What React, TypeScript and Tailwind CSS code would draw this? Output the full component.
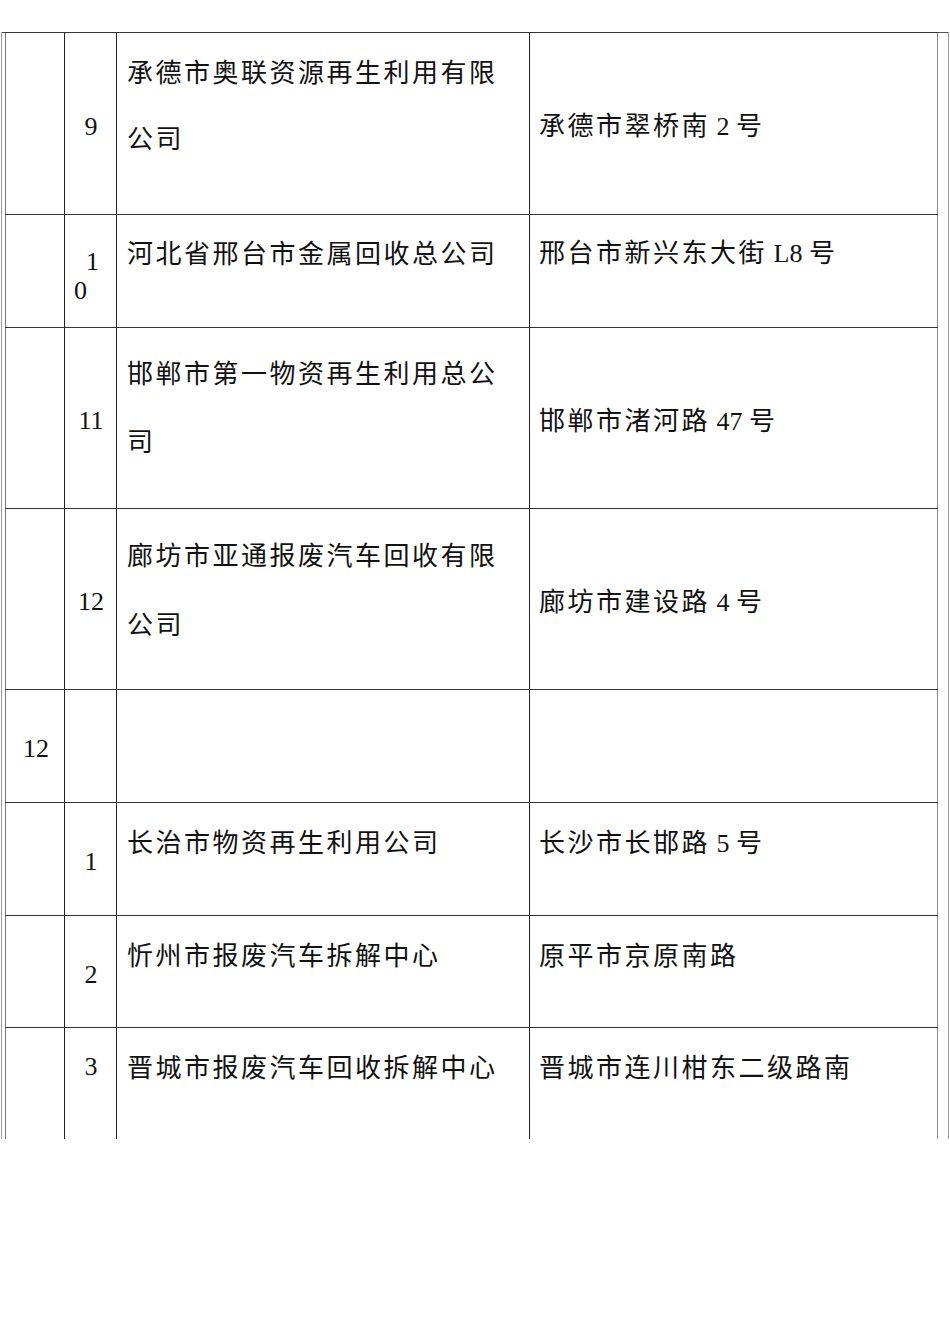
import React from "react";

type Row = {
  h: number;
  c1?: string;
  num?: React.ReactNode;
  numAlign: "center" | "top";
  name?: string[];
  namePt: number;
  nameLh: number;
  addr?: React.ReactNode;
  addrAlign: "center" | "top";
  addrPt: number;
};

const L = ({ children }: { children: React.ReactNode }) => (
  <span className="tracking-normal">{children}</span>
);

const rows: Row[] = [
  { h: 182, num: "9", numAlign: "center", name: ["承德市奥联资源再生利用有限", "公司"], namePt: 8, nameLh: 66, addr: <>承德市翠桥南<L> 2 </L>号</>, addrAlign: "center", addrPt: 7 },
  { h: 113, num: "10", numAlign: "center", name: ["河北省邢台市金属回收总公司"], namePt: 7, nameLh: 66, addr: <>邢台市新兴东大街<L> L8 </L>号</>, addrAlign: "top", addrPt: 6 },
  { h: 181, num: "11", numAlign: "center", name: ["邯郸市第一物资再生利用总公", "司"], namePt: 13, nameLh: 68, addr: <>邯郸市渚河路<L> 47 </L>号</>, addrAlign: "center", addrPt: 7 },
  { h: 181, num: "12", numAlign: "center", name: ["廊坊市亚通报废汽车回收有限", "公司"], namePt: 13, nameLh: 69, addr: <>廊坊市建设路<L> 4 </L>号</>, addrAlign: "center", addrPt: 7 },
  { h: 113, c1: "12", numAlign: "center", namePt: 6, nameLh: 66, addrAlign: "top", addrPt: 6 },
  { h: 113, num: "1", numAlign: "center", name: ["长治市物资再生利用公司"], namePt: 8, nameLh: 66, addr: <>长沙市长邯路<L> 5 </L>号</>, addrAlign: "top", addrPt: 8 },
  { h: 112, num: "2", numAlign: "center", name: ["忻州市报废汽车拆解中心"], namePt: 8, nameLh: 66, addr: "原平市京原南路", addrAlign: "top", addrPt: 8 },
  { h: 112, num: "3", numAlign: "top", name: ["晋城市报废汽车回收拆解中心"], namePt: 8, nameLh: 66, addr: "晋城市连川柑东二级路南", addrAlign: "top", addrPt: 8 },
];

export default function App() {
  return (
    <div
      className="w-[950px] h-[1344px] bg-white text-[#111] overflow-hidden"
      style={{ fontFamily: '"Liberation Serif", "Noto Sans CJK SC", serif' }}
    >
      <div className="h-[32px]" />
      <div className="flex h-[1107px]">
        <div className="ml-[1px] w-[1px] bg-[#9a9a9a]" />
        <div className="w-[3px] border-t border-[#555]" />
        <div className="w-[933px] flex flex-col">
          {rows.map((r, i) => (
            <div
              key={i}
              className="flex border-t border-[#333] text-[26px] tracking-[2.5px]"
              style={{ height: r.h }}
            >
              <div className="w-[59px] border-l border-[#777] flex items-center justify-center pt-[6px] pl-[2px]">
                {r.c1 && <span className="leading-[66px] tracking-normal">{r.c1}</span>}
              </div>
              <div
                className={
                  "w-[52px] border-l border-[#222] flex justify-center tracking-normal " +
                  (r.numAlign === "center" ? "items-center pt-[6px]" : "items-start pt-[6px]")
                }
              >
                {r.num === "10" ? (
                  <div className="w-full flex flex-col leading-[29px] pt-[4px]">
                    <span className="pl-[21px]">1</span>
                    <span className="pl-[9px]">0</span>
                  </div>
                ) : (
                  <span className="leading-[66px] pl-[1px]">{r.num}</span>
                )}
              </div>
              <div className="w-[413px] border-l border-[#222] pl-[10px]" style={{ paddingTop: r.namePt }}>
                {r.name?.map((l, j) => (
                  <div key={j} className="whitespace-nowrap" style={{ lineHeight: r.nameLh + "px" }}>
                    {l}
                  </div>
                ))}
              </div>
              <div
                className={
                  "w-[409px] border-l border-r border-l-[#222] border-r-[#8a8a8a] pl-[9px] flex " +
                  (r.addrAlign === "center" ? "items-center" : "items-start")
                }
                style={{ paddingTop: r.addrPt }}
              >
                {r.addr && <div className="leading-[66px] whitespace-nowrap">{r.addr}</div>}
              </div>
            </div>
          ))}
        </div>
        <div className="w-[10px] border-t border-[#555]" />
        <div className="w-[1px] bg-[#9a9a9a]" />
      </div>
    </div>
  );
}
